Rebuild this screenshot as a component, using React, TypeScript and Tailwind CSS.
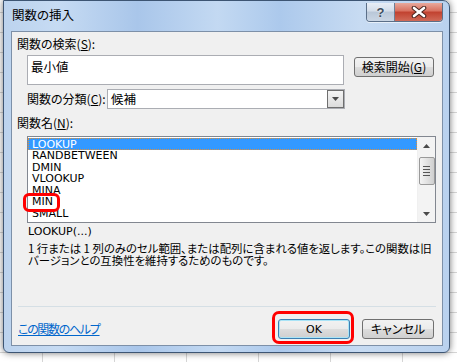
import React from "react";

const Tri = ({ dir }: { dir: "up" | "down" }) => (
  <svg width="7" height="4" viewBox="0 0 7 4">
    {dir === "up" ? <path d="M0 4 L3.5 0 L7 4 Z" fill="#4a4a4a" /> : <path d="M0 0 L7 0 L3.5 4 Z" fill="#4a4a4a" />}
  </svg>
);

export default function App() {
  const items = ["LOOKUP", "RANDBETWEEN", "DMIN", "VLOOKUP", "MINA", "MIN", "SMALL"];
  const cells = Array.from({ length: 7 * 19 });
  return (
    <div className="relative w-[457px] h-[362px] overflow-hidden bg-white text-black font-['Noto_Sans_CJK_JP',sans-serif] [font-feature-settings:'palt']">
      {/* Excel grid background */}
      <div className="grid grid-cols-[43px_repeat(6,72px)] grid-rows-[13px_repeat(18,20px)]">
        {cells.map((_, i) => (
          <div key={i} className="border-r border-b border-[#d6d6d6]" />
        ))}
      </div>

      {/* Dialog window */}
      <div className="absolute left-[3px] top-0 w-[447px] h-[353px] rounded-tr-[7px] rounded-b-[6px] border border-[#3d5573] bg-[linear-gradient(to_right,#bcd3ee_0%,#c6dbf3_12%,#a9c6ea_30%,#c3d9f2_48%,#acc9ec_62%,#c7dbf2_80%,#b9d1ee_100%)] shadow-[0_0_7px_rgba(0,0,0,0.55)] flex flex-col pl-[7px] pr-[6px] pb-[6px]">
        {/* Title bar */}
        <div className="h-[30px] flex items-start justify-between">
          <div className="mt-[6px] ml-[1px] text-[12.5px] leading-[16px] text-black">関数の挿入</div>
          <div className="flex mt-[2px] rounded-b-[4px] border border-t-0 border-[#5b6f88] overflow-hidden shadow-[0_1px_0_rgba(255,255,255,0.6)]">
            <div className="w-[28px] h-[18px] bg-[linear-gradient(to_bottom,#e8eef6_0%,#d3dde9_45%,#b9c7d8_50%,#cad6e4_100%)] border-r border-[#6d7f96] flex items-center justify-center">
              <span className="text-[13px] leading-none font-bold text-[#3f4e61] [text-shadow:0_0_2px_#ffffff] font-['Liberation_Sans',sans-serif]">?</span>
            </div>
            <div className="w-[47px] h-[18px] bg-[linear-gradient(to_bottom,#e9a99c_0%,#d8705f_45%,#c1412f_50%,#d06a58_100%)] flex items-center justify-center">
              <svg width="16" height="12" viewBox="0 0 16 12">
                <path d="M3 2 L13 10 M13 2 L3 10" stroke="#4a2620" strokeWidth="4.6" strokeLinecap="round" />
                <path d="M3 2 L13 10 M13 2 L3 10" stroke="#ffffff" strokeWidth="2.6" strokeLinecap="round" />
              </svg>
            </div>
          </div>
        </div>

        {/* Client area */}
        <div className="flex-1 border border-[#7d90a8] bg-[#f0f0f0] flex flex-col text-[12px]">
          <div className="pl-[5px] pt-[5px] h-[19px] leading-[14px]">
            関数の検索(<span className="underline">S</span>):
          </div>
          <div className="mt-[4px] flex">
            <div className="ml-[15px] w-[317px] h-[30px] border border-[#abadb3] bg-white pl-[3px] pt-[3px] leading-[16px] text-[12.5px]">最小値</div>
            <div className="ml-[10px] mt-[2px] w-[80px] h-[20px] rounded-[3px] border border-[#707070] bg-[linear-gradient(to_bottom,#f2f2f2_0%,#ebebeb_50%,#dddddd_51%,#cfcfcf_100%)] flex items-center justify-center leading-none">
              検索開始(<span className="underline">G</span>)
            </div>
          </div>
          <div className="mt-[4px] ml-[15px] h-[20px] flex items-center">
            <div className="w-[80px] leading-[14px]">
              関数の分類(<span className="underline">C</span>):
            </div>
            <div className="w-[238px] h-[20px] border border-[#abadb3] bg-white flex items-center justify-between">
              <span className="pl-[3px] text-[12.5px] leading-none">候補</span>
              <div className="w-[17px] h-[18px] border border-[#6f6f6f] bg-[linear-gradient(to_bottom,#f4f4f4,#dcdcdc)] flex items-center justify-center">
                <Tri dir="down" />
              </div>
            </div>
          </div>
          <div className="mt-[7px] pl-[5px] h-[14px] leading-[14px]">
            関数名(<span className="underline">N</span>):
          </div>
          <div className="mt-[6px] ml-[15px] w-[409px] h-[87px] border border-[#828790] bg-white relative flex">
            <div className="flex-1 pt-[1px] overflow-hidden">
              {items.map((it, i) => (
                <div
                  key={it}
                  className={
                    i === 0
                      ? "h-[12px] leading-[11px] pl-[3px] bg-[#3399ff] text-white border border-dotted border-[#e0903a] font-['DejaVu_Sans',sans-serif] text-[11px]"
                      : "h-[11.6px] leading-[11.6px] pl-[4px] font-['DejaVu_Sans',sans-serif] text-[11px]"
                  }
                >
                  {it}
                </div>
              ))}
            </div>
            <div className="w-[18px] bg-[#f3f3f3] border-l border-[#f0f0f0] flex flex-col items-center">
              <div className="h-[18px] flex items-center justify-center">
                <Tri dir="up" />
              </div>
              <div className="mt-[2px] w-[16px] h-[28px] rounded-[2px] border border-[#9a9a9a] bg-[linear-gradient(to_right,#f4f4f4,#e2e2e2_50%,#cfcfcf)] flex flex-col items-center justify-center gap-[2px]">
                <div className="w-[7px] h-px bg-[#555]" />
                <div className="w-[7px] h-px bg-[#555]" />
                <div className="w-[7px] h-px bg-[#555]" />
                <div className="w-[7px] h-px bg-[#555]" />
              </div>
              <div className="flex-1" />
              <div className="h-[16px] flex items-center justify-center">
                <Tri dir="down" />
              </div>
            </div>
            <div className="absolute left-[-5px] top-[56px] w-[37px] h-[19px] border-[3px] border-[#ff0000] rounded-[6px]" />
          </div>
          <div className="mt-[2px] pl-[16px] h-[14px] leading-[14px] font-['DejaVu_Sans',sans-serif] text-[11px]">LOOKUP(...)</div>
          <div className="mt-[3px] pl-[16px] leading-[12px] text-[11.4px] whitespace-nowrap">
            <div>1 行または 1 列のみのセル範囲、または配列に含まれる値を返します。この関数は旧</div>
            <div>バージョンとの互換性を維持するためのものです。</div>
          </div>
          <div className="mt-[40px] mx-[6px] h-px bg-[#d5dfe5]" />
          <div className="mt-[12px] pl-[6px] pr-[8px] flex items-center">
            <span className="text-[#0066cc] underline leading-[14px] tracking-[-1.3px]">この関数のヘルプ</span>
            <div className="flex-1" />
            <div className="relative w-[72px] h-[20px]">
              <div className="w-full h-full rounded-[3px] border border-[#3c7fb1] shadow-[inset_0_0_0_1px_#a9e4f7] bg-[linear-gradient(to_bottom,#f2f2f2_0%,#ebebeb_50%,#dddddd_51%,#cfcfcf_100%)] flex items-center justify-center leading-none font-['DejaVu_Sans',sans-serif] text-[11px]">
                OK
              </div>
              <div className="absolute left-[-6px] top-[-8px] w-[82px] h-[33px] border-[3px] border-[#ff0000] rounded-[7px]" />
            </div>
            <div className="ml-[12px] w-[72px] h-[20px] rounded-[3px] border border-[#707070] bg-[linear-gradient(to_bottom,#f2f2f2_0%,#ebebeb_50%,#dddddd_51%,#cfcfcf_100%)] flex items-center justify-center leading-none">
              キャンセル
            </div>
          </div>
        </div>
      </div>
    </div>
  );
}
